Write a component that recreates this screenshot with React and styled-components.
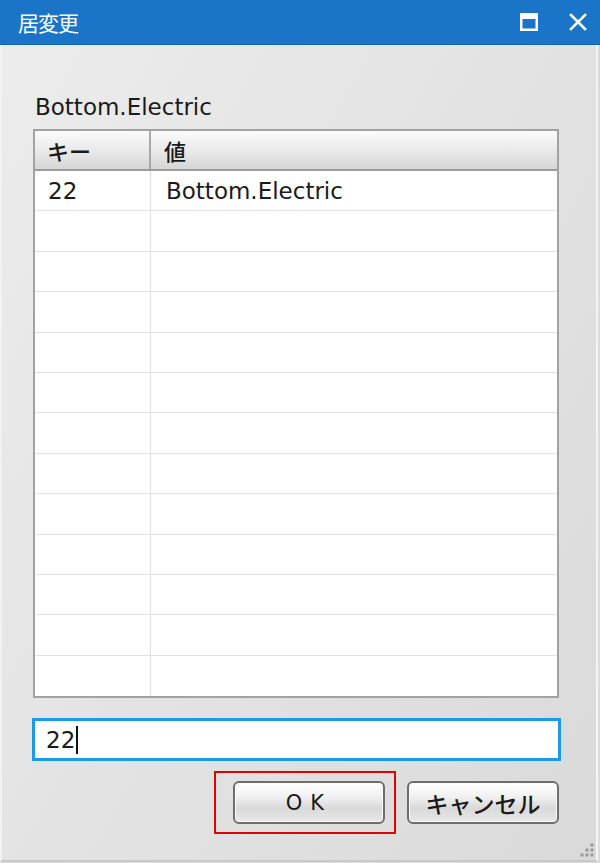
import React from 'react';
import styled, { createGlobalStyle } from 'styled-components';

const GlobalStyle = createGlobalStyle`
  html, body {
    margin: 0;
    padding: 0;
    background: #dcdcdc;
  }
  body {
    font-family: "DejaVu Sans", "Noto Sans CJK JP", sans-serif;
  }
`;

const Window = styled.div`
  position: relative;
  width: 600px;
  height: 863px;
  display: flex;
  flex-direction: column;
  box-sizing: border-box;
  overflow: hidden;
`;

const TitleBar = styled.div`
  height: 44px;
  flex: 0 0 44px;
  display: flex;
  align-items: center;
  padding: 0 6px 0 18px;
  background: #1a75c8;
  border-bottom: 1px solid #1566b2;
  color: #fff;
`;

const Title = styled.span`
  flex: 1;
  font-size: 21px;
  font-family: "Noto Sans CJK JP", sans-serif;
  letter-spacing: -1px;
`;

const TitleButton = styled.div`
  width: 32px;
  height: 32px;
  display: flex;
  align-items: center;
  justify-content: center;
  margin-left: ${p => p.$gap || 0}px;
`;

const Body = styled.div`
  flex: 1;
  display: flex;
  flex-direction: column;
  padding: 47px 40px 0 31px;
  background: linear-gradient(120deg, #ececec 0%, #e1e1e1 60%, #dadada 100%);
  border-left: 2px solid #f2f2f2;
  border-right: 2px solid #f4f4f4;
  border-bottom: 2px solid #c8c8c8;
  margin-right: 2px;
  margin-bottom: 1px;
`;

const Label = styled.div`
  font-size: 23px;
  line-height: 30px;
  color: #1a1a1a;
  margin-left: 2px;
  height: 37px;
`;

const Table = styled.div`
  width: 526px;
  box-sizing: border-box;
  border: 2px solid #a2a2a2;
  background: #fff;
  display: flex;
  flex-direction: column;
`;

const HeaderRow = styled.div`
  display: grid;
  grid-template-columns: 116px 1fr;
  height: 40px;
  box-sizing: border-box;
  background: linear-gradient(#fbfbfb 0%, #ececec 45%, #d6d6d6 100%);
  border-bottom: 2px solid #9c9c9c;
`;

const HeaderCell = styled.div`
  display: flex;
  align-items: center;
  padding-left: ${p => (p.$sep ? 12 : 13)}px;
  font-size: 22px;
  font-weight: 500;
  font-family: "Noto Sans CJK JP", sans-serif;
  color: #1a1a1a;
  border-right: ${p => (p.$sep ? '2px solid #a8a8a8' : 'none')};
`;

const Row = styled.div`
  display: grid;
  grid-template-columns: 116px 1fr;
  height: 40.4px;
  box-sizing: border-box;
  border-bottom: ${p => (p.$last ? 'none' : '1px solid #e2e2e2')};
`;

const Cell = styled.div`
  display: flex;
  align-items: center;
  padding-left: ${p => (p.$sep ? 13 : 15)}px;
  padding-top: 1px;
  font-size: 23px;
  color: #1a1a1a;
  border-right: ${p => (p.$sep ? '1px solid #dedee8' : 'none')};
`;

const Input = styled.div`
  margin-top: 20px;
  margin-left: -1px;
  width: 529px;
  height: 43px;
  box-sizing: border-box;
  border: 3px solid #1b9be6;
  background: #fff;
  display: flex;
  align-items: center;
  padding-left: 11px;
  font-size: 23px;
  color: #1a1a1a;
`;

const Caret = styled.span`
  display: inline-block;
  width: 2px;
  height: 28px;
  background: #111;
  margin-left: 1px;
`;

const ButtonRow = styled.div`
  display: flex;
  justify-content: flex-end;
  align-items: center;
  gap: 11px;
  margin-top: 10px;
  width: 526px;
`;

const Highlight = styled.div`
  border: 2px solid #e00000;
  padding: 8px 9px 8px 17px;
  display: flex;
`;

const Button = styled.button`
  width: 152px;
  height: 43px;
  box-sizing: border-box;
  border: 2px solid #6e6e6e;
  border-radius: 6px;
  background: linear-gradient(#ffffff 0%, #f1f1f1 35%, #d9d9d9 65%, #e9e9e9 100%);
  box-shadow: inset 0 0 0 1px #fafafa;
  font-family: "DejaVu Sans", "Noto Sans CJK JP", sans-serif;
  font-size: ${p => p.$size || 21}px;
  font-weight: ${p => p.$weight || 400};
  letter-spacing: ${p => p.$spacing || 0}px;
  color: #1a1a1a;
  padding: 0;
  display: flex;
  align-items: center;
  justify-content: center;
`;

const Grip = styled.svg`
  position: absolute;
  right: 5px;
  bottom: 5px;
`;

const rows = Array.from({ length: 13 }, (_, i) =>
  i === 0 ? ['22', 'Bottom.Electric'] : ['', '']
);

export default function App() {
  return (
    <>
      <GlobalStyle />
      <Window>
        <TitleBar>
          <Title>居変更</Title>
          <TitleButton>
            <svg width="18" height="18" viewBox="0 0 18 18">
              <rect x="1.25" y="1.25" width="15.5" height="15.5" fill="none" stroke="#fff" strokeWidth="2.5" />
              <rect x="1" y="1" width="16" height="5" fill="#fff" />
            </svg>
          </TitleButton>
          <TitleButton $gap={17}>
            <svg width="18" height="18" viewBox="0 0 18 18">
              <path d="M2 2 L16 16 M16 2 L2 16" stroke="#fff" strokeWidth="2.6" strokeLinecap="square" />
            </svg>
          </TitleButton>
        </TitleBar>
        <Body>
          <Label>Bottom.Electric</Label>
          <Table>
            <HeaderRow>
              <HeaderCell $sep>キー</HeaderCell>
              <HeaderCell>値</HeaderCell>
            </HeaderRow>
            {rows.map((r, i) => (
              <Row key={i} $last={i === rows.length - 1}>
                <Cell $sep>{r[0]}</Cell>
                <Cell>{r[1]}</Cell>
              </Row>
            ))}
          </Table>
          <Input>
            22<Caret />
          </Input>
          <ButtonRow>
            <Highlight>
              <Button $spacing={8}>OK</Button>
            </Highlight>
            <Button $size={23} $weight={500}>キャンセル</Button>
          </ButtonRow>
        </Body>
        <Grip width="16" height="16" viewBox="0 0 16 16">
          {[[13, 3], [8, 8], [13, 8], [3, 13], [8, 13], [13, 13]].map(([x, y], i) => (
            <rect key={i} x={x - 1.5} y={y - 1.5} width="3" height="3" fill="#9a9a9a" />
          ))}
        </Grip>
      </Window>
    </>
  );
}
